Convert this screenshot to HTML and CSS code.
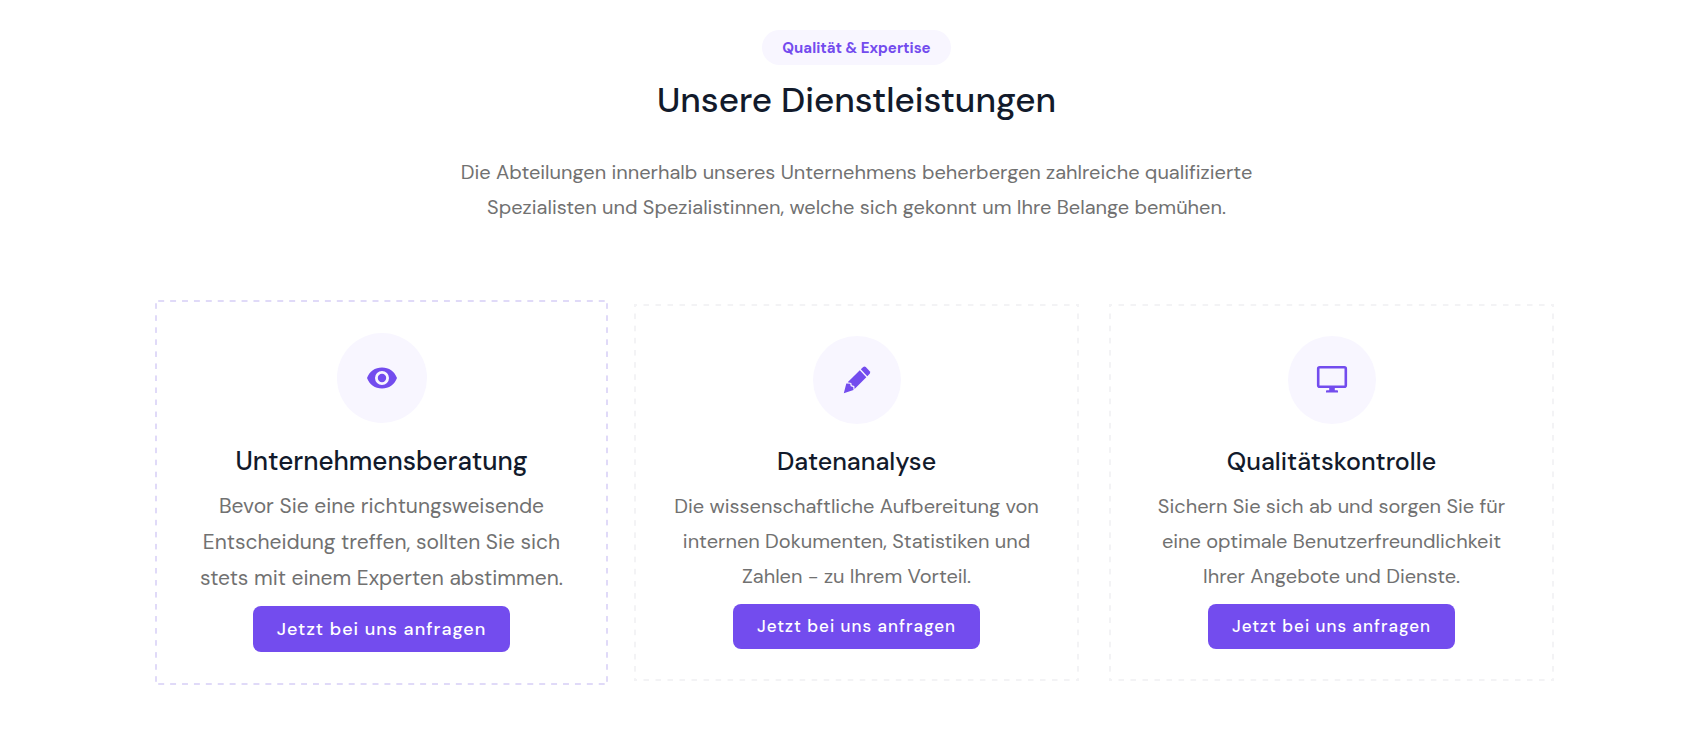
FILE: index.html
```html
<!DOCTYPE html>
<html lang="de">
<head>
<meta charset="utf-8">
<meta name="viewport" content="width=device-width, initial-scale=1">
<title>Unsere Dienstleistungen</title>
<link rel="stylesheet" href="styles.css">
</head>
<body>
<section class="services">
  <header class="intro">
    <span class="badge">Qualität &amp; Expertise</span>
    <h2 class="intro-title">Unsere Dienstleistungen</h2>
    <p class="text intro-text">Die Abteilungen innerhalb unseres Unternehmens beherbergen zahlreiche qualifizierte Spezialisten und Spezialistinnen, welche sich gekonnt um Ihre Belange bemühen.</p>
  </header>
  <div class="cards">
    <article class="card card-active">
      <div class="card-icon">
        <svg width="32" height="32" viewBox="0 0 32 32" aria-hidden="true"><path fill="currentColor" fill-rule="evenodd" d="M16 5.500C9 5.500 3.500 9.500 1 16c2.500 6.500 8 10.500 15 10.500S28.500 22.500 31 16C28.500 9.500 23 5.500 16 5.500zM16 9a7 7 0 1 1 0 14a7 7 0 0 1 0-14zM16 11.800a4.200 4.200 0 1 0 0 8.400a4.200 4.200 0 0 0 0-8.400z"/></svg>
      </div>
      <h3 class="card-title">Unternehmensberatung</h3>
      <p class="text">Bevor Sie eine richtungsweisende Entscheidung treffen, sollten Sie sich stets mit einem Experten abstimmen.</p>
      <button class="button" type="button">Jetzt bei uns anfragen</button>
    </article>
    <article class="card">
      <div class="card-icon">
        <svg width="32" height="32" viewBox="0 0 32 32" aria-hidden="true"><g fill="currentColor"><path d="M19.800 5.300L22.200 2.900Q23.500 1.900 24.800 3.100L28.700 7.200Q29.700 8.500 28.700 9.800L26.300 12.200z"/><path d="M18.800 6.300L25.300 13.200L13.600 24.900L13.300 22L10.800 21.200L10.300 18.900L6.700 18.300z"/><path d="M5.300 19.400L9.200 19.800L9.700 22.300L12.200 23.100L12.500 26L2.800 29.200z"/></g></svg>
      </div>
      <h3 class="card-title">Datenanalyse</h3>
      <p class="text">Die wissenschaftliche Aufbereitung von internen Dokumenten, Statistiken und Zahlen - zu Ihrem Vorteil.</p>
      <button class="button" type="button">Jetzt bei uns anfragen</button>
    </article>
    <article class="card">
      <div class="card-icon">
        <svg width="32" height="32" viewBox="0 0 32 32" aria-hidden="true"><rect x="2.200" y="3.200" width="27.600" height="19.600" rx="1.500" fill="none" stroke="currentColor" stroke-width="2.600"/><path fill="currentColor" d="M13.200 23h5.600v3.200h2.400q.8 0 .8.800v1.500H10V27q0-.8.800-.8h2.400z"/></svg>
      </div>
      <h3 class="card-title">Qualitätskontrolle</h3>
      <p class="text">Sichern Sie sich ab und sorgen Sie für eine optimale Benutzerfreundlichkeit Ihrer Angebote und Dienste.</p>
      <button class="button" type="button">Jetzt bei uns anfragen</button>
    </article>
  </div>
</section>
</body>
</html>
```
FILE: styles.css
```css
* { box-sizing: border-box; }

body {
  margin: 0;
  padding: 30px 0 48px 27px;
  background: #fff;
  color: #717171;
  font-family: "DM Sans", Inter, "Noto Sans", sans-serif;
  font-optical-sizing: none;
  font-variant-ligatures: none;
}

.services {
  max-width: 1425px;
  margin: 0 auto;
  padding: 0 15px;
}

.intro {
  display: flex;
  flex-direction: column;
  align-items: center;
  max-width: 840px;
  margin: 0 auto 79px;
  text-align: center;
}

.badge {
  padding: 1px 20px 0;
  border-radius: 18px;
  background: #f8f6ff;
  color: #734cee;
  font-size: 15px;
  font-weight: 700;
  line-height: 34px;
}

.intro-title {
  margin: 12px 0 32px;
  color: #121a2b;
  font-size: 35px;
  font-weight: 500;
  line-height: 46px;
}

.text {
  margin: 0;
  font-size: 20px;
  line-height: 35px;
}

.cards {
  display: grid;
  grid-template-columns: repeat(auto-fit, minmax(360px, 1fr));
  gap: 30px;
}

/* The dashed frame is drawn with gradients: 6px dashes, 6px gaps */
.card {
  --frame: #f3f3f5;
  --dash: var(--frame) 0 25%, transparent 25% 75%, var(--frame) 75%;
  display: flex;
  flex-direction: column;
  align-items: center;
  padding: 32px;
  background-image:
    linear-gradient(90deg, var(--dash)),
    linear-gradient(90deg, var(--dash)),
    linear-gradient(var(--dash)),
    linear-gradient(var(--dash));
  background-position: top, bottom, left, right;
  background-size: 12px 2px, 12px 2px, 2px 12px, 2px 12px;
  background-repeat: round no-repeat, round no-repeat, no-repeat round, no-repeat round;
  text-align: center;
}

.card-icon {
  display: grid;
  place-items: center;
  width: 88px;
  height: 88px;
  border-radius: 50%;
  background: #f8f6ff;
  color: #734cee;
}

.card-title {
  margin: 18px 0 7px;
  color: #121a2b;
  font-size: 25px;
  font-weight: 500;
  line-height: 40px;
}

.button {
  height: 45px;
  margin-top: 10px;
  padding: 0 24px;
  border: 0;
  border-radius: 8px;
  background: #734cee;
  color: #fff;
  font-family: inherit;
  font-size: 17px;
  font-weight: 500;
  line-height: 45px;
  letter-spacing: 1px;
}

.card-active {
  --frame: #e0daf8;
  margin: -4px;
  padding: 33px;
}

.card-active .card-icon {
  width: 90px;
  height: 90px;
}

.card-active .card-title {
  font-size: 26px;
}

.card-active .text {
  font-size: 21px;
  line-height: 36px;
}

.card-active .button {
  height: 46px;
  font-size: 18px;
}
```
